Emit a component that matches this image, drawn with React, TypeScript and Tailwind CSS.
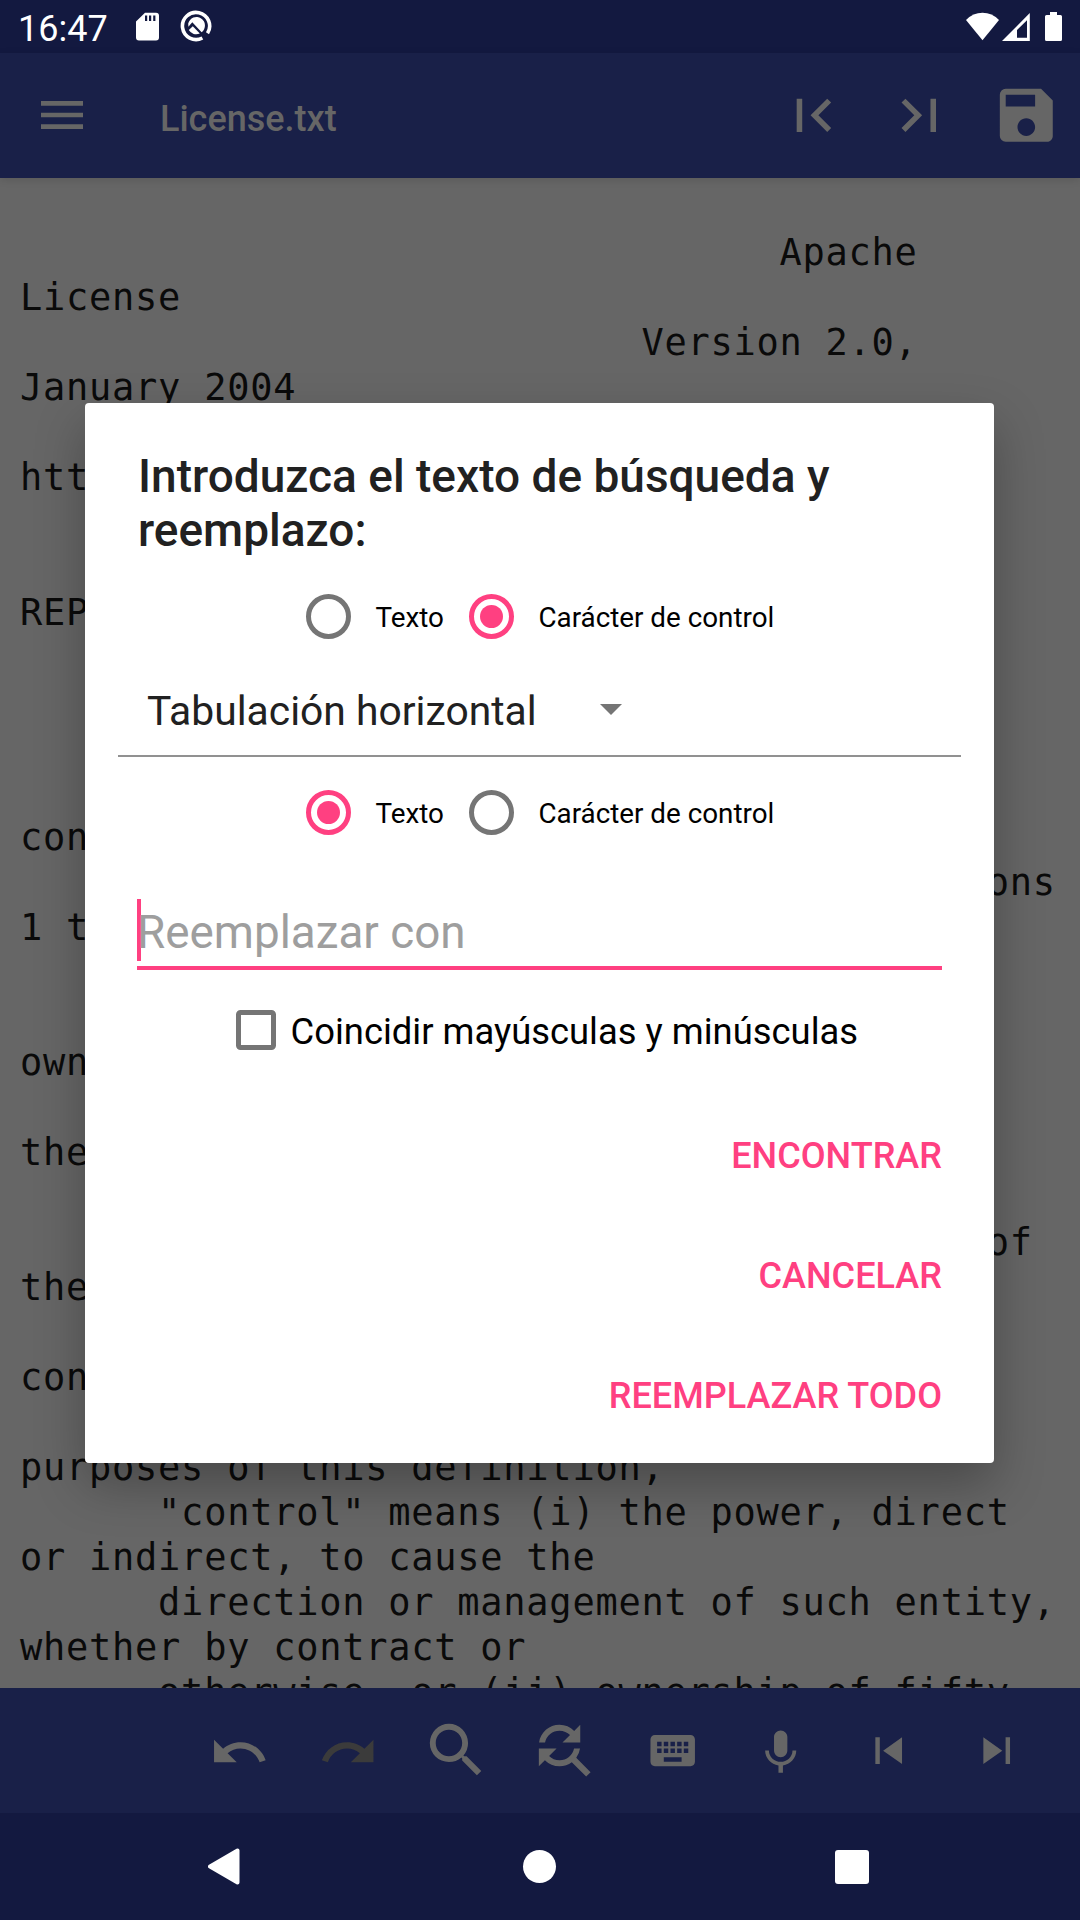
import type { ReactNode } from "react";
import {
  MdFindReplace,
  MdFirstPage,
  MdKeyboard,
  MdLastPage,
  MdMenu,
  MdMic,
  MdRedo,
  MdSave,
  MdSearch,
  MdSkipNext,
  MdSkipPrevious,
  MdUndo,
} from "react-icons/md";

const DOCUMENT = `
                                 Apache
License
                           Version 2.0,
January 2004

http://www.apache.org/licenses/

   TERMS AND CONDITIONS FOR USE,
REPRODUCTION, AND DISTRIBUTION

   1. Definitions.

      "License" shall mean the terms and
conditions for use, reproduction,
      and distribution as defined by Sections
1 through 9 of this document.

      "Licensor" shall mean the copyright
owner or entity authorized by
      the copyright owner that is granting
the License.

      "Legal Entity" shall mean the union of
the acting entity and all
      other entities that control, are
controlled by, or are under common
      control with that entity. For the
purposes of this definition,
      "control" means (i) the power, direct
or indirect, to cause the
      direction or management of such entity,
whether by contract or
      otherwise, or (ii) ownership of fifty`;

function StatusBar() {
  return (
    <div className="flex h-[53px] shrink-0 items-start bg-[#131940] text-white">
      <span className="ml-[18px] w-[118px] text-[36px] leading-[58px]">16:47</span>
      <svg className="mt-[12px] h-[29px] w-[23px]" viewBox="0 0 23 29" fill="currentColor">
        <path
          fillRule="evenodd"
          d="M9 .7H20a3 3 0 0 1 3 3V25.5a3 3 0 0 1-3 3H3a3 3 0 0 1-3-3V9.5zM9 3.5v5.5h2.2V3.5zM13 3.5v5.5h2.2V3.5zM17.2 3.5v5.5h2.2V3.5z"
        />
      </svg>
      <svg className="ml-[21px] mt-[10px] h-[32px] w-[32px]" viewBox="0 0 32 32" fill="none">
        <path d="M22.4 28A13.6 13.6 0 1 1 27.5 23.3" stroke="currentColor" strokeWidth="3.6" />
        <path d="M8.2 13.5A8.5 8.5 0 1 1 21.6 22.3L12.3 12.3 8.4 16.8z" fill="currentColor" />
        <path d="M8.8 20L12.8 16.2 19.8 23.5A8.5 8.5 0 0 1 8.8 20z" fill="currentColor" />
      </svg>
      <div className="ml-auto mr-[18px] mt-[12px] flex">
        <svg className="h-[29px] w-[33px]" viewBox="0 0 33 29" fill="currentColor">
          <path d="M0 8Q7 .8 16.5 .8T33 8L16.5 28.3z" />
        </svg>
        <svg className="ml-[3px] h-[29px] w-[28px]" viewBox="0 0 28 29" fill="currentColor">
          <path fillRule="evenodd" d="M27.8 1V29H0zM25 8.2L15 18V25.7H25z" />
        </svg>
        <svg className="ml-[15px] h-[29px] w-[17px]" viewBox="0 0 17 29" fill="currentColor">
          <path d="M5 0h7v3h3.5A1.5 1.5 0 0 1 17 4.5V27.5a1.5 1.5 0 0 1-1.5 1.5H1.5A1.5 1.5 0 0 1 0 27.5V4.5A1.5 1.5 0 0 1 1.5 3H5z" />
        </svg>
      </div>
    </div>
  );
}

function Toolbar() {
  return (
    <div className="z-10 flex h-[125px] shrink-0 items-center bg-[#192048] text-[#666] shadow-[0_2px_8px_rgba(0,0,0,0.12)]">
      <MdMenu className="mb-[2px] ml-[34px] size-[56px]" />
      <span className="ml-[70px] mt-[6px] text-[36px] font-medium">License.txt</span>
      <MdFirstPage className="ml-auto size-[66.7px]" />
      <MdLastPage className="ml-[40px] size-[66.7px]" />
      <MdSave className="ml-[38px] mr-[18.5px] size-[70.6px]" />
    </div>
  );
}

function BarItem({ children }: { children: ReactNode }) {
  return <div className="flex w-[108px] items-center justify-center">{children}</div>;
}

function BottomBar() {
  return (
    <div className="flex h-[125px] shrink-0 justify-end bg-[#192048] pr-[29.5px] text-[#666]">
      <BarItem><MdUndo className="mr-[2px] mt-[3px] size-[60.5px]" /></BarItem>
      <BarItem><MdRedo className="mr-[1px] mt-[3px] size-[60.5px] text-[#3b3b3b]" /></BarItem>
      <BarItem><MdSearch className="size-[70.6px]" /></BarItem>
      <BarItem><MdFindReplace className="mb-[4px] mr-[4px] size-[71px]" /></BarItem>
      <BarItem><MdKeyboard className="size-[53.4px]" /></BarItem>
      <BarItem><MdMic className="mt-[4px] size-[53.4px]" /></BarItem>
      <BarItem><MdSkipPrevious className="size-[53.4px]" /></BarItem>
      <BarItem><MdSkipNext className="size-[53.4px]" /></BarItem>
    </div>
  );
}

function NavigationBar() {
  return (
    <div className="flex h-[107px] shrink-0 items-center bg-[#131940] pl-[208px] text-white">
      <svg className="h-[37px] w-[32px]" viewBox="0 0 32 37" fill="currentColor">
        <path
          d="M2 18.5L29.5 2.5V34.5z"
          stroke="currentColor"
          strokeWidth="4"
          strokeLinejoin="round"
        />
      </svg>
      <div className="ml-[283px] size-[33px] rounded-full bg-white" />
      <div className="ml-[279px] size-[34px] rounded-[3px] bg-white" />
    </div>
  );
}

function Radio({ label, checked = false }: { label: string; checked?: boolean }) {
  return (
    <div className="flex items-center">
      <span
        className={`flex size-[45px] items-center justify-center rounded-full border-[5px] ${
          checked ? "border-[#ff4081]" : "border-[#757575]"
        }`}
      >
        {checked && <span className="size-[23px] rounded-full bg-[#ff4081]" />}
      </span>
      <span className="ml-[24.5px] mt-[3px] text-[27.8px] text-black">{label}</span>
    </div>
  );
}

function ModeSelector({ control }: { control: boolean }) {
  return (
    <div className="flex h-full items-center gap-[25px] pl-[221px]">
      <Radio label="Texto" checked={!control} />
      <Radio label="Carácter de control" checked={control} />
    </div>
  );
}

function DialogButton({ label }: { label: string }) {
  return (
    <button className="h-[120px] pr-[52px] text-right text-[36.1px] font-medium text-[#ff4081]">
      {label}
    </button>
  );
}

function ReplaceDialog() {
  return (
    <div className="absolute left-[85px] top-[403px] z-20 flex h-[1060px] w-[909px] flex-col rounded-[4px] bg-white shadow-[0_22px_50px_rgba(0,0,0,0.28)]">
      <h2 className="mb-[1px] mt-[46px] h-[108px] pl-[53px] text-[46px] font-medium leading-[54px] text-[#212121]">
        Introduzca el texto de búsqueda y<br />
        reemplazo:
      </h2>
      <div className="h-[117px]">
        <ModeSelector control />
      </div>
      <div className="flex h-[72px] items-center pl-[62px] text-[#212121]">
        <span className="mt-[2px] w-[453px] text-[40.8px]">Tabulación horizontal</span>
        <svg className="mb-[3px] h-[11px] w-[22px]" viewBox="0 0 22 11" fill="#757575">
          <path d="M0 0h22L11 11z" />
        </svg>
      </div>
      <div className="ml-[33px] mt-[8px] h-[2px] w-[843px] bg-[#919191]" />
      <div className="h-[111px]">
        <ModeSelector control={false} />
      </div>
      <div className="mx-[52px] mt-[31px] flex h-[71px] border-b-4 border-[#ff4081]">
        <span className="h-[62px] w-[4px] bg-[#ff4081]" />
        <span className="-ml-[4px] text-[45.8px] leading-[67px] text-[#9e9e9e]">Reemplazar con</span>
      </div>
      <div className="flex h-[119px] items-center pl-[150.5px]">
        <span className="size-[40px] rounded-[4.5px] border-[5px] border-[#757575]" />
        <span className="ml-[15px] mt-[5px] text-[36.4px] text-black">
          Coincidir mayúsculas y minúsculas
        </span>
      </div>
      <div className="mt-[7px] flex flex-col">
        <DialogButton label="ENCONTRAR" />
        <DialogButton label="CANCELAR" />
        <DialogButton label="REEMPLAZAR TODO" />
      </div>
    </div>
  );
}

export default function App() {
  return (
    <div className="relative flex h-[1920px] w-[1080px] flex-col overflow-hidden bg-[#666] font-['Roboto',sans-serif]">
      <StatusBar />
      <Toolbar />
      <div className="h-[1510px] overflow-hidden pl-[20px] pt-[7px]">
        <pre className="font-['DejaVu_Sans_Mono',monospace] text-[37px] leading-[45px] tracking-[0.74px] text-[#0a0a0a]">
          {DOCUMENT}
        </pre>
      </div>
      <BottomBar />
      <NavigationBar />
      <ReplaceDialog />
    </div>
  );
}
